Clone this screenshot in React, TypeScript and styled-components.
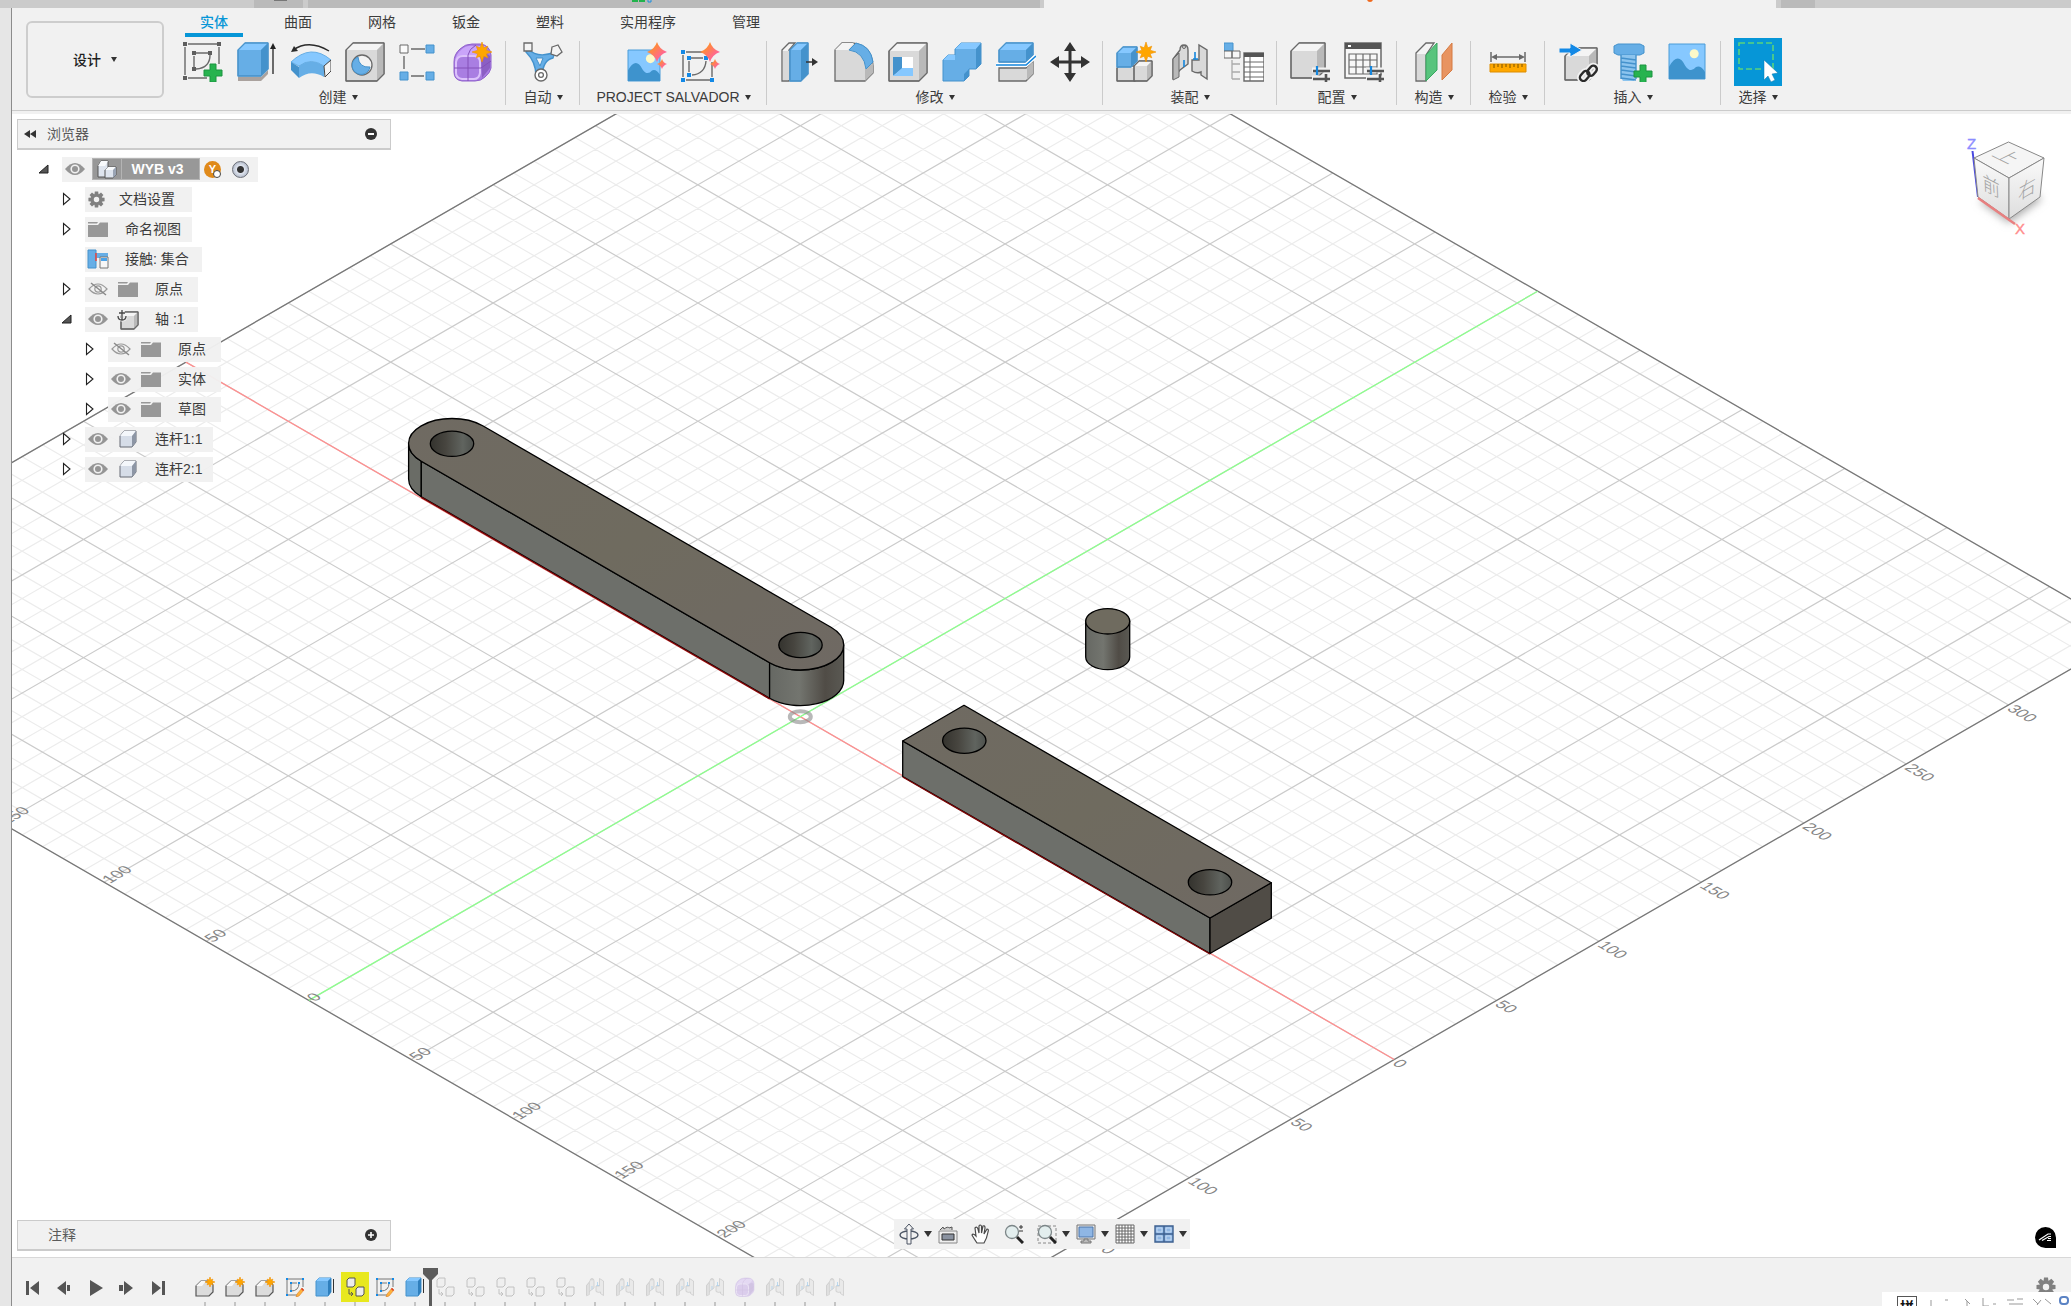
import React from 'react';
import styled, { createGlobalStyle, css } from 'styled-components';

const C = {
  bar: '#f1f1f1',
  line: '#cbcbcb',
  text: '#3c3c3c',
  blue: '#0696d7',
  hi: '#86c8ff',
  mid: '#66aee6',
  deep: '#4492cc',
  g1: '#f4f4f4',
  g2: '#d9d9d9',
  g3: '#b9b9b9',
  ink: '#696969',
};

const Global = createGlobalStyle`
  * { box-sizing: border-box; }
  html, body, #root { height: 100%; }
  body {
    margin: 0;
    overflow: hidden;
    background: #fff;
    color: ${C.text};
    font: 14px/20px "Liberation Sans", "Noto Sans CJK SC", sans-serif;
  }
  button {
    margin: 0;
    padding: 0;
    border: 0;
    background: none;
    color: inherit;
    font: inherit;
    cursor: pointer;
  }
  svg { display: block; }
`;

/* ---------- shell ---------- */

const Page = styled.div`
  display: grid;
  grid-template: 8px auto 1fr auto / 12px 1fr;
  height: 100%;
`;
const TopStrip = styled.div`
  grid-column: 1 / -1;
  display: flex;
  background: #cbcbcb;
  overflow: hidden;
`;
const StripPart = styled.div<{ $w?: number; $bg: string }>`
  flex: ${p => (p.$w ? `0 0 ${p.$w}px` : '1 1 0')};
  display: flex;
  background: ${p => p.$bg};
`;
const LeftStrip = styled.div`
  grid-row: 2 / 5;
  background: #e6e6e6;
  border-right: 1px solid #8c8c8c;
`;

/* ---------- toolbar ---------- */

const Toolbar = styled.header`
  display: flex;
  height: 106px;
  padding-left: 14px;
  background: linear-gradient(${C.line}, ${C.line}) 0 102px / 100% 1px no-repeat ${C.bar};
`;
const Workspace = styled.button`
  display: flex;
  align-items: center;
  justify-content: center;
  gap: 10px;
  width: 138px;
  height: 77px;
  margin: 13px 12px 0 0;
  border: 2px solid #cdcdcd;
  border-radius: 6px;
  font-weight: 500;
  color: #1e1e1e;
`;
const Caret = styled.span<{ $small?: boolean }>`
  width: 0;
  height: 0;
  border: solid transparent;
  border-width: ${p => (p.$small ? '5px 3px 0' : '6px 4px 0')};
  border-top-color: #333;
`;
const Ribbon = styled.div`
  display: flex;
  flex-direction: column;
  min-width: 0;
`;
const Tabs = styled.nav`
  display: flex;
  gap: 26px;
  height: 30px;
  padding-left: 9px;
`;
const Tab = styled.button<{ $on?: boolean }>`
  height: 29px;
  padding: 0 15px 2px;
  white-space: nowrap;
  ${p => p.$on && css`
    color: ${C.blue};
    font-weight: 500;
    box-shadow: inset 0 -4px 0 ${C.blue};
  `}
`;
const Groups = styled.div`
  display: flex;
  align-items: flex-start;
`;
const Group = styled.section<{ $min?: number; $first?: boolean; $last?: boolean }>`
  display: flex;
  flex-direction: column;
  align-items: center;
  min-width: ${p => p.$min ?? 74}px;
  padding: 0 6px 0 ${p => (p.$first ? 0 : 6)}px;
  ${p => !p.$last && css`
    background: linear-gradient(${C.line}, ${C.line}) right 3px / 1px 64px no-repeat;
  `}
`;
const Tools = styled.div`
  display: flex;
`;
const Tool = styled.button<{ $on?: boolean }>`
  display: flex;
  align-items: center;
  justify-content: center;
  width: ${p => (p.$on ? 48 : 54)}px;
  height: 48px;
  background: ${p => (p.$on ? C.blue : 'transparent')};
`;
const GroupMenu = styled.button`
  display: flex;
  align-items: center;
  gap: 5px;
  height: 22px;
  white-space: nowrap;
`;

/* ---------- viewport ---------- */

const Viewport = styled.main`
  position: relative;
  display: flex;
  flex-direction: column;
  justify-content: space-between;
  min-height: 0;
  padding: 5px 5px 6px;
  overflow: hidden;
  background: #fff;
`;
const Canvas = styled.svg`
  position: absolute;
  inset: 0;
  width: 100%;
  height: 100%;
`;
const Overlay = styled.div`
  position: relative;
  display: flex;
  justify-content: space-between;
  align-items: flex-start;
`;
const Side = styled.div`
  flex: 0 0 374px;
`;
const Panel = styled.div`
  display: flex;
  align-items: center;
  height: 31px;
  padding: 0 12px 0 5px;
  background: ${C.bar};
  border: 1px solid ${C.line};
  border-bottom-width: 2px;
  color: #5a5a5a;
`;
const PanelTitle = styled.span<{ $indent?: boolean }>`
  flex: 1;
  margin-left: ${p => (p.$indent ? 25 : 10)}px;
`;
const Tree = styled.ul`
  margin: 4px 0 0;
  padding: 0;
  list-style: none;
`;
const Row = styled.li<{ $level: number }>`
  display: flex;
  align-items: center;
  height: 30px;
  padding-left: ${p => 22 + p.$level * 23}px;
`;
const Twist = styled.button`
  width: 12px;
  height: 16px;
  margin-right: 11px;
`;
const Chip = styled.div<{ $w: number }>`
  display: flex;
  align-items: center;
  width: ${p => p.$w}px;
  height: 25px;
  background: rgba(240, 240, 240, 0.96);
`;
const EyeBox = styled.button`
  display: flex;
  justify-content: center;
  width: 26px;
  margin-right: 4px;
`;
const Glyph = styled.span<{ $w?: number }>`
  flex: none;
  display: flex;
  justify-content: center;
  width: ${p => p.$w ?? 26}px;
`;
const Label = styled.span<{ $gap?: number }>`
  margin-left: ${p => p.$gap ?? 14}px;
  white-space: nowrap;
`;
const RootName = styled.div`
  display: flex;
  align-items: center;
  width: 108px;
  height: 22px;
  margin-right: 4px;
  background: #989898;
  border: 1px solid #b4b4b4;
  color: #fff;
  font-weight: 700;
  & > span:last-child {
    flex: 1;
    padding-right: 6px;
    border-left: 1px solid #b4b4b4;
    text-align: center;
  }
`;
const Radio = styled.input`
  appearance: none;
  width: 17px;
  height: 17px;
  margin: 0 0 0 11px;
  border: 1px solid #6c6f78;
  border-radius: 50%;
  background: radial-gradient(circle, #333 0 3px, #dfe4ee 4px, #b4bccb 8px);
`;
const Version = styled.span`
  width: 17px;
  height: 17px;
  border-radius: 50%;
  background: #e08a1a;
  color: #fff;
  font-size: 11px;
  line-height: 17px;
  font-weight: 700;
  text-align: center;
  position: relative;
  &::after {
    content: '';
    position: absolute;
    right: 0;
    bottom: 0;
    width: 6px;
    height: 6px;
    border: 1px solid #444;
    border-radius: 50%;
    background: #fff;
  }
`;
const CubeBox = styled.div`
  margin: 16px 16px 0 0;
`;
const BottomOverlay = styled.div`
  position: relative;
  display: grid;
  grid-template-columns: 374px 1fr 374px;
  align-items: end;
`;
const NavBar = styled.div`
  justify-self: center;
  display: flex;
  align-items: center;
  gap: 6px;
  width: 296px;
  height: 30px;
  margin-bottom: 2px;
  padding: 0 5px;
  background: ${C.bar};
`;
const NavItem = styled.button<{ $wide?: boolean }>`
  display: flex;
  align-items: center;
  justify-content: space-between;
  flex: none;
  width: ${p => (p.$wide ? 33 : 27)}px;
  height: 26px;
`;
const Help = styled.button`
  justify-self: end;
  margin: 0 10px 3px 0;
`;

/* ---------- timeline ---------- */

const Timeline = styled.footer`
  position: relative;
  display: flex;
  height: 49px;
  background: ${C.bar};
  border-top: 1px solid #d8d8d8;
  overflow: hidden;
`;
const Transport = styled.div`
  display: flex;
  align-items: center;
  gap: 11px;
  height: 60px;
  padding-left: 11px;
`;
const Play = styled.button`
  display: flex;
  justify-content: center;
  width: 20px;
`;
const Steps = styled.div`
  display: flex;
  margin: 14px 0 0 23px;
`;
const Step = styled.button<{ $on?: boolean; $faded?: boolean }>`
  position: relative;
  display: flex;
  justify-content: center;
  align-items: flex-start;
  flex: none;
  width: 30px;
  height: 36px;
  padding-top: 5px;
  background:
    linear-gradient(#c4c4c4, #c4c4c4) center 30px / 2px 5px no-repeat
    ${p => (p.$on ? ', linear-gradient(#e8e81e, #e8e81e) center top / 28px 30px no-repeat' : '')};
  & > svg { opacity: ${p => (p.$faded ? 0.3 : 1)}; }
`;
const Marker = styled.div`
  position: absolute;
  z-index: 1;
  top: -4px;
  right: -8px;
  width: 15px;
  height: 40px;
  clip-path: polygon(0 0, 100% 0, 100% 6px, 9px 12px, 9px 100%, 6px 100%, 6px 12px, 0 6px);
  background: #5c5c5c;
`;
const Corner = styled.div`
  flex: 1;
  display: flex;
  flex-direction: column;
  align-items: flex-end;
`;
const Settings = styled.button`
  width: 20px;
  height: 20px;
  margin: 19px 15px 0 0;
`;
const Ime = styled.div`
  position: absolute;
  right: 0;
  bottom: 0;
  display: flex;
  gap: 12px;
  width: 189px;
  height: 14px;
  padding: 4px 2px 0 15px;
  background: #fff;
  overflow: hidden;
  color: #111;
`;
const ImeMode = styled.span`
  flex: none;
  height: 22px;
  padding: 0 2px;
  border: 1px solid #555;
  font-weight: 700;
`;

/* ---------- shared drawing pieces ---------- */

const Icon: React.FC<{ s?: number; w?: number; h?: number; box?: string; children: React.ReactNode }> = ({ s = 40, w, h, box, children }) => (
  <svg width={w ?? s} height={h ?? s} viewBox={box ?? `0 0 ${w ?? s} ${h ?? s}`} fill="none" aria-hidden="true">{children}</svg>
);
const Plus = ({ x, y }: { x: number; y: number }) => (
  <path d={`M${x - 3} ${y - 9}h6v6h6v6h-6v6h-6v-6h-6v-6h6z`} fill="#27b34f" stroke="#1c9440" strokeWidth="1" />
);
const Burst = ({ x, y, r = 10 }: { x: number; y: number; r?: number }) => {
  const pts = Array.from({ length: 16 }, (_, i) => {
    const a = (i * Math.PI) / 8;
    const q = i % 2 ? r * 0.46 : i % 4 ? r * 0.82 : r;
    return `${(x + q * Math.sin(a)).toFixed(1)},${(y - q * Math.cos(a)).toFixed(1)}`;
  }).join(' ');
  return <polygon points={pts} fill="#ffa600" stroke="#f09000" strokeWidth=".6" />;
};
const Spark = ({ x, y, r }: { x: number; y: number; r: number }) => {
  const k = r * 0.25;
  return <path d={`M${x} ${y - r}Q${x + k} ${y - k} ${x + r} ${y}Q${x + k} ${y + k} ${x} ${y + r}Q${x - k} ${y + k} ${x - r} ${y}Q${x - k} ${y - k} ${x} ${y - r}z`} fill="url(#spark)" />;
};
const Box = ({ x, y, w, h, d, c = 'gray' }: { x: number; y: number; w: number; h: number; d: number; c?: 'gray' | 'blue' }) => {
  const [a, b, e, s] = c === 'gray' ? [C.g1, C.g2, C.g3, C.ink] : [C.hi, C.mid, C.deep, '#4a94cc'];
  return (
    <g stroke={s} strokeLinejoin="round">
      <path d={`M${x} ${y + d}L${x + d} ${y}H${x + w}V${y + h - d}L${x + w - d} ${y + h}H${x}z`} fill={b} />
      <path d={`M${x} ${y + d}L${x + d} ${y}H${x + w}L${x + w - d} ${y + d}z`} fill={a} stroke="none" />
      <path d={`M${x + w} ${y}V${y + h - d}L${x + w - d} ${y + h}V${y + d}z`} fill={e} stroke="none" />
      <path d={`M${x} ${y + d}L${x + d} ${y}H${x + w}V${y + h - d}L${x + w - d} ${y + h}H${x}z`} strokeWidth="1.3" />
    </g>
  );
};

const SketchIcon = () => (
  <Icon>
    <path d="M5 2H34M2 5V33M36 5V22M5 36H24M13 11H25M11 14V25M27 13Q27 26 13 27" stroke={C.ink} strokeWidth="1.4" />
    <path d="M0 0h4v4H0zM34 0h4v4h-4zM0 34h4v4H0zM9 9h4v4H9zM25 9h4v4h-4zM9 25h4v4H9z" fill="#5e5e5e" />
    <Plus x={30} y={31} />
  </Icon>
);
const ExtrudeIcon = () => (
  <Icon>
    <path d="M1 35H24L31 28V32L24 39H1z" fill="#aaa29e" />
    <Box x={1} y={1} w={30} h={33} d={7} c="blue" />
    <path d="M36 32V5" stroke="#222" strokeWidth="1.3" /><path d="M36 1l3 6h-6z" fill="#222" />
  </Icon>
);
const RevolveIcon = () => (
  <Icon>
    <path d="M2 8Q18-3 38 9" stroke="#2b2b2b" strokeWidth="1.4" /><path d="M0 10l3-6 4 5z" fill="#2b2b2b" />
    <path d="M0 20Q20 1 40 18L33 24Q20 15 8 24z" fill={C.hi} stroke={C.mid} />
    <path d="M0 20L8 25V36L0 28z" fill={C.deep} /><path d="M8 24Q20 15 33 24V35Q20 27 8 36z" fill={C.mid} />
    <path d="M33 24l7-6v11l-6 6z" fill={C.g1} stroke="#444" />
  </Icon>
);
const HoleIcon = () => (
  <Icon><Box x={1} y={1} w={38} h={38} d={7} /><circle cx="17" cy="23" r="10" fill="#f3f3f3" stroke={C.ink} strokeWidth="1.3" /><path d="M13 15Q14 26 25 25A9 9 0 1 1 13 15z" fill={C.mid} stroke={C.deep} /></Icon>
);
const PatternIcon = () => (
  <Icon>
    <path d="M12 7H26M5 14V27M12 34H25" stroke={C.ink} strokeWidth="1.4" />
    <path d="M1 3h8v8H1z" fill="#fafafa" stroke={C.ink} /><path d="M27 3h8v8h-8zM27 30h8v8h-8zM1 30h8v8H1z" fill={C.mid} stroke={C.deep} />
  </Icon>
);
const Form = () => (
  <>
    <path d="M1 20Q1 12 7 7Q12 2 19 2H27Q37 3 38 13V26Q37 31 32 35Q28 39 22 39H9Q1 38 1 30z" fill="#a97ee2" stroke="#8f60cc" />
    <path d="M2 19Q3 12 9 7Q14 3 21 4H31Q36 6 33 9L28 14H9Q4 15 2 19z" fill="#c9a4fa" />
    <path d="M28 14Q34 10 37 14V26L29 36z" fill="#8b5fc4" />
    <path d="M3 20Q4 14 10 14H22Q27 15 27 20V31Q26 37 21 37H9Q3 36 3 31z" stroke="#dcc2fb" strokeWidth="2" />
    <path d="M15 13V39M1 26H28L38 19M15 13Q16 7 23 3" stroke="#8450b8" />
  </>
);
const FormIcon = () => <Icon><Form /><Burst x={29} y={10} /></Icon>;
const AutoIcon = () => (
  <Icon>
    <path d="M5 7Q15 17 32 10L30 16Q20 18 19 34H13Q13 20 3 10z" fill={C.mid} stroke={C.deep} strokeWidth="1.4" />
    <path d="M13 16l7 0-3 8z" fill="#f4f4f4" stroke={C.deep} />
    <path d="M1 1h8v8H1zM29 5l6-2 4 7-5 4-6-2z" fill="#f4f4f4" stroke={C.ink} strokeWidth="1.3" />
    <circle cx="18" cy="33" r="6" fill="#fff" stroke={C.ink} strokeWidth="1.4" /><circle cx="18" cy="33" r="2.4" stroke={C.ink} strokeWidth="1.3" />
  </Icon>
);
const Landscape = ({ w, h }: { w: number; h: number }) => (
  <>
    <path d={`M0 0H${w}V${h}H0z`} fill={C.hi} stroke="#4b9cd8" />
    <path d={`M0 ${h * 0.65}Q${w * 0.25} ${h * 0.2} ${w * 0.45} ${h * 0.62}Q${w * 0.6} ${h * 0.85} ${w * 0.75} ${h * 0.66}Q${w * 0.88} ${h * 0.6} ${w} ${h * 0.8}V${h}H0z`} fill="#3e93cd" />
    <circle cx={w * 0.7} cy={h * 0.28} r="4.5" fill="#fdf9c9" />
  </>
);
const SalvadorImage = () => <Icon><g transform="translate(1 8)"><Landscape w={32} h={31} /></g><Spark x={30} y={10} r={10} /><Spark x={35} y={22} r={5} /></Icon>;
const SalvadorSketch = () => (
  <Icon>
    <path d="M5 10H22M2 13V35M31 20V35M5 38H29M10 16H22M8 19V30M25 19Q24 32 11 33" stroke={C.ink} strokeWidth="1.4" />
    <path d="M0 8h4v4H0zM0 36h4v4H0zM29 36h4v4h-4zM6 14h4v4H6zM23 14h4v4h-4zM6 31h4v4H6z" fill="#1389e6" />
    <Spark x={29} y={10} r={10} /><Spark x={34} y={22} r={5} />
  </Icon>
);
const PressPull = () => (
  <Icon><path d="M2 8l7-7h6l-6 7v31H2z" fill={C.g1} stroke={C.ink} strokeWidth="1.3" /><path d="M3 9h6v29H3z" fill={C.g2} /><Box x={10} y={1} w={18} h={38} d={7} c="blue" /><path d="M26 20h8" stroke="#333" strokeWidth="1.5" /><path d="M38 20l-6-4v8z" fill="#333" /></Icon>
);
const FilletIcon = () => (
  <Icon><path d="M1 39V8L8 1H18Q38 3 39 24V31L31 39z" fill={C.g2} stroke={C.ink} strokeWidth="1.3" /><path d="M1 8L8 1h12l-6 7z" fill={C.g1} /><path d="M31 27L39 21V31L31 39z" fill={C.g3} /><path d="M15 8L22 1Q37 4 39 20L32 27Q30 10 15 8z" fill={C.mid} stroke={C.deep} /></Icon>
);
const ShellIcon = () => <Icon><Box x={1} y={1} w={38} h={38} d={8} /><path d="M5 15h20v19H5z" fill="#fff" /><path d="M5 15h9v12l-9 7z" fill={C.deep} /><path d="M5 34l9-8h11v8z" fill={C.hi} /></Icon>;
const CombineIcon = () => (
  <Icon><path d="M1 18L6 13H13V7L19 1H39V22L34 27H27V34L22 39H1z" fill={C.mid} stroke={C.deep} /><path d="M13 7L19 1H39L34 7zM1 18L6 13H13V18z" fill={C.hi} /><path d="M34 7L39 1V22L34 27zM22 32l5-5V34L22 39z" fill={C.deep} /></Icon>
);
const SplitIcon = () => (
  <Icon><Box x={3} y={1} w={34} h={19} d={7} c="blue" /><path d="M3 26H30L37 19V32L30 39H3z" fill={C.g2} stroke={C.ink} strokeWidth="1.3" /><path d="M31 26l6-6V32l-6 6z" fill={C.g3} /><path d="M0 23H30L40 14" stroke="#fff" strokeWidth="4" /><path d="M0 23H30L40 14" stroke="#1486dd" strokeWidth="1.6" /></Icon>
);
const MoveIcon = () => <Icon><path d="M20 6V34M6 20H34" stroke="#333" strokeWidth="3" /><path d="M20 0l6 9H14zM20 40l-6-9h12zM0 20l9-6v12zM40 20l-9 6V14z" fill="#333" /></Icon>;
const NewComponent = () => (
  <Icon><Box x={1} y={24} w={20} h={15} d={2} /><Box x={18} y={19} w={18} h={20} d={5} /><Box x={1} y={5} w={20} h={20} d={6} c="blue" /><Burst x={30} y={10} /></Icon>
);
const Joint = () => (
  <>
    <path d="M3 36V17L10 8Q10 3 14 3Q18 3 18 8V22L10 28z" fill={C.g2} stroke={C.ink} strokeWidth="1.4" />
    <path d="M9 35l-6 3V17l6-6z" fill={C.g3} stroke={C.ink} />
    <path d="M37 37V8L29 3V18L22 18V29Q27 32 31 30V33z" fill={C.g2} stroke={C.ink} strokeWidth="1.4" />
    <circle cx="14" cy="5" r="1.5" stroke={C.ink} /><path d="M14 18v7M25 10v7M23 17h5" stroke="#1486dd" strokeWidth="1.6" />
  </>
);
const JointIcon = () => <Icon><Joint /></Icon>;
const AssemblyTable = () => (
  <Icon>
    <path d="M0 1h9v8H0z" fill={C.mid} stroke={C.deep} /><path d="M0 9h8v7H0zM8 9h8v7H8z" fill="#f7f7f7" stroke={C.ink} />
    <path d="M8 18V37M8 22h8M8 30h8M8 37h8" stroke="#aaa" strokeWidth="1.3" />
    <path d="M20 11h20v28H20z" fill="#fff" stroke={C.ink} strokeWidth="1.4" /><path d="M20 11h20v4H20z" fill="#555" />
    <path d="M20 20h20M20 25h20M20 30h20M20 35h20M26 15v24" stroke={C.ink} />
  </Icon>
);
const Sliders = () => (
  <g><path d="M22 28H40M22 36H40" stroke="#f1f1f1" strokeWidth="5" /><path d="M23 29H40M23 37H40M36 32v8" stroke="#555" strokeWidth="2.6" /><path d="M27 24v9" stroke="#1486dd" strokeWidth="2.2" /></g>
);
const ConfigIcon = () => <Icon><Box x={1} y={1} w={34} h={35} d={8} /><Sliders /></Icon>;
const ConfigTable = () => (
  <Icon><path d="M1 1h36v35H1z" fill="#f7f7f7" stroke={C.ink} strokeWidth="1.5" /><path d="M1 1h36v6H1z" fill="#555" /><path d="M4 3h3v2H4z" fill="#fff" /><path d="M5 12h28v20H5zM5 18h28M5 25h28M12 12v20M19 12v20M26 12v20" stroke={C.ink} strokeWidth="1.2" /><Sliders /></Icon>
);
const PlaneIcon = () => (
  <Icon><path d="M2 11l10-10h8l-8 12v26H2z" fill={C.g1} stroke={C.ink} strokeWidth="1.3" /><path d="M3 12h8v26H3z" fill={C.g2} /><path d="M12 13L23 1V28L12 39z" fill="#58c47d" stroke="#39a761" /><path d="M28 13L38 1V28L28 38z" fill="#e89461" stroke="#d67b43" /></Icon>
);
const MeasureIcon = () => (
  <Icon><path d="M3 10V20M37 10V20M6 15H34" stroke={C.ink} strokeWidth="1.5" /><path d="M3 15l6-3v6zM37 15l-6-3v6z" fill={C.ink} /><path d="M2 22H38V30H2z" fill="#ffa800" stroke="#dd8d00" /><path d="M6 22v4M10 22v3M14 22v4M18 22v3M22 22v4M26 22v3M30 22v4M34 22v3" stroke="#7a5300" /></Icon>
);
const InsertDerive = () => (
  <Icon>
    <Box x={6} y={6} w={32} h={32} d={8} /><path d="M0 6H11V1L23 8L11 15V11H0z" fill="#1389e6" stroke="#f1f1f1" />
    <g stroke="#f1f1f1" strokeWidth="6"><rect x="20" y="31" width="11" height="7" rx="3.5" transform="rotate(-50 25 34)" /><rect x="27" y="25" width="11" height="7" rx="3.5" transform="rotate(-50 33 28)" /></g>
    <g stroke="#2b2b2b" strokeWidth="2.4"><rect x="20" y="31" width="11" height="7" rx="3.5" transform="rotate(-50 25 34)" /><rect x="27" y="25" width="11" height="7" rx="3.5" transform="rotate(-50 33 28)" /></g>
  </Icon>
);
const BoltIcon = () => (
  <Icon><path d="M1 4l4-2H27l4 2V11l-4 2H5l-4-2z" fill={C.mid} stroke={C.deep} /><path d="M8 13H23V36l-2 3H10l-2-3z" fill="#8cc4ee" /><path d="M8 16l15 2M8 20l15 2M8 24l15 2M8 28l15 2M8 32l15 2M8 36l15 2M8 13V37M23 13V37" stroke={C.deep} strokeWidth="1.4" /><Plus x={30} y={32} /></Icon>
);
const CanvasIcon = () => <Icon><g transform="translate(2 2)"><Landscape w={36} h={35} /></g></Icon>;
const SelectIcon = () => (
  <Icon s={48}><path d="M5 5H39V31H5z" stroke="#59d47e" strokeWidth="1.6" strokeDasharray="6 3" /><path d="M30 22L44 35L38 36L41 42L37 44L34 38L30 42z" fill="#fff" stroke="#0b79ad" strokeWidth=".5" /></Icon>
);

const groups: { label: string; min?: number; on?: boolean; icons: [string, React.FC][] }[] = [
  { label: '创建', icons: [['创建草图', SketchIcon], ['拉伸', ExtrudeIcon], ['旋转', RevolveIcon], ['孔', HoleIcon], ['阵列', PatternIcon], ['创建形状', FormIcon]] },
  { label: '自动', icons: [['自动', AutoIcon]] },
  { label: 'PROJECT SALVADOR', min: 187, icons: [['图像', SalvadorImage], ['草图', SalvadorSketch]] },
  { label: '修改', icons: [['按拉', PressPull], ['圆角', FilletIcon], ['抽壳', ShellIcon], ['合并', CombineIcon], ['分割', SplitIcon], ['移动', MoveIcon]] },
  { label: '装配', icons: [['新建零部件', NewComponent], ['联接', JointIcon], ['零部件表', AssemblyTable]] },
  { label: '配置', icons: [['配置', ConfigIcon], ['配置表', ConfigTable]] },
  { label: '构造', icons: [['平面', PlaneIcon]] },
  { label: '检验', icons: [['测量', MeasureIcon]] },
  { label: '插入', min: 176, icons: [['衍生', InsertDerive], ['紧固件', BoltIcon], ['画布', CanvasIcon]] },
  { label: '选择', on: true, icons: [['选择', SelectIcon]] },
];

/* ---------- browser tree ---------- */

const Eye = ({ off }: { off?: boolean }) => off ? (
  <Icon w={20} h={14}><path d="M1 7Q10-3 19 7Q10 17 1 7z" stroke="#999" strokeWidth="1.2" /><circle cx="10" cy="7" r="3.2" stroke="#999" strokeWidth="1.2" /><path d="M3 1L18 13" stroke="#888" strokeWidth="1.4" /></Icon>
) : (
  <Icon w={20} h={14}><path d="M0 7Q10-5 20 7Q10 19 0 7z" fill="#959595" /><circle cx="10" cy="7" r="3.8" stroke="#f1f1f1" strokeWidth="1.6" fill="#959595" /></Icon>
);
const Folder = () => <Icon w={22} h={17}><path d="M1 1h10l-1 1.500H1zM1 4H11L13 1.500H21V16H1z" fill="#989898" /></Icon>;
const GearShape = ({ s }: { s: number }) => (
  <Icon w={s} h={s} box="-10 -10 20 20">
    {[0, 45, 90, 135, 180, 225, 270, 315].map(a => <path key={a} d="M-2-9.500H2L2.500-5.500H-2.500z" fill="#808080" transform={`rotate(${a})`} />)}
    <circle r="5" stroke="#808080" strokeWidth="3.600" />
  </Icon>
);
const ContactIcon = () => <Icon w={22} h={20}><path d="M1 1h8v18H1z" fill={C.mid} stroke={C.deep} /><path d="M9 4h12v5H9z" fill={C.mid} /><path d="M9 4v8" stroke="#e8453c" strokeWidth="1.5" /><path d="M13 8h8v11h-8z" fill="#f7f7f7" stroke="#777" /><path d="M14 9h6v3h-6z" fill="#4aa3ea" /></Icon>;
const SmallBox = () => <Icon w={18} h={18}><path d="M1 6l4-5h12v11l-4 5H1z" fill="#d6dde8" stroke="#666b75" /><path d="M1 6l4-5h12l-4 5z" fill="#f4f7fb" /><path d="M17 1v11l-4 5V6z" fill="#8d96a5" /></Icon>;
const AnchorBox = () => <Icon w={22} h={21}><Box x={4} y={3} w={17} h={17} d={4} /><path d="M5 0v10M2 4h6M1 7q0 4 4 4t4-4" stroke="#f1f1f1" strokeWidth="3" /><path d="M5 1v10M2 4h6M1 7q0 4 4 4t4-4" stroke="#444" strokeWidth="1.3" /></Icon>;
const RootBox = () => <Icon w={20} h={19}><path d="M1 6l3-5h7v16H1z" fill="#dfe5ee" stroke="#555" /><path d="M8 10l3-3h8v8l-3 3H8z" fill="#dfe5ee" stroke="#555" /><path d="M8 10l3-3h8l-3 3zM1 6l3-5h7l-3 5z" fill="#f8fafc" /><path d="M16 10l3-3v8l-3 3z" fill="#9aa4b4" /></Icon>;

type Node = { text: string; level: number; open?: boolean; leaf?: boolean; eye?: 'on' | 'off'; icon: React.FC; w: number; gap?: number };
const nodes: Node[] = [
  { text: '文档设置', level: 1, icon: () => <GearShape s={17} />, w: 107, gap: 12 },
  { text: '命名视图', level: 1, icon: Folder, w: 107 },
  { text: '接触: 集合', level: 1, leaf: true, icon: ContactIcon, w: 117 },
  { text: '原点', level: 1, eye: 'off', icon: Folder, w: 113 },
  { text: '轴 :1', level: 1, open: true, eye: 'on', icon: AnchorBox, w: 113 },
  { text: '原点', level: 2, eye: 'off', icon: Folder, w: 113 },
  { text: '实体', level: 2, eye: 'on', icon: Folder, w: 113 },
  { text: '草图', level: 2, eye: 'on', icon: Folder, w: 113 },
  { text: '连杆1:1', level: 1, eye: 'on', icon: SmallBox, w: 128 },
  { text: '连杆2:1', level: 1, eye: 'on', icon: SmallBox, w: 128 },
];
const TwistIcon = ({ open }: { open?: boolean }) => open
  ? <Icon w={12} h={16}><path d="M0 12L9 4V12z" fill="#555" stroke="#222" /></Icon>
  : <Icon w={12} h={16}><path d="M1.500 2.500L8 8L1.500 13.500z" fill="#fff" stroke="#222" strokeWidth="1.1" /></Icon>;

/* ---------- scene ---------- */

const OX = 800.3, OY = 716.7, SX = 102.4, SY = 59.1;
const pt = (u: number, v: number) => `${(OX + (u + v) * SX).toFixed(1)} ${(OY + (u - v) * SY).toFixed(1)}`;
const U0 = -6, U1 = 5.8, V0 = -4.8, V1 = 7.2;
const gridPath = (major: boolean) => {
  let d = '';
  for (let i = -30; i <= 29; i++) if ((i % 5 === 0) === major) d += `M${pt(i / 5, V0)}L${pt(i / 5, V1)}`;
  for (let i = -24; i <= 36; i++) if ((i % 5 === 0) === major) d += `M${pt(U0, i / 5)}L${pt(U1, i / 5)}`;
  return d;
};
const Hole = ({ x, y }: { x: number; y: number }) => <ellipse cx={x} cy={y} rx="21.700" ry="12.600" fill="url(#hole)" stroke="#000" strokeWidth="1.3" />;

const Scene = () => (
  <Canvas aria-label="模型">
    <defs>
      <linearGradient id="hole"><stop offset="0" stopColor="#34332e" /><stop offset=".35" stopColor="#47453f" /><stop offset=".75" stopColor="#60645f" /><stop offset="1" stopColor="#4d504c" /></linearGradient>
      <linearGradient id="round"><stop offset="0" stopColor="#666863" /><stop offset=".4" stopColor="#73756f" /><stop offset=".75" stopColor="#504c46" /><stop offset="1" stopColor="#5a5953" /></linearGradient>
      <linearGradient id="top" x2="1" y2="1"><stop offset="0" stopColor="#6f6a62" /><stop offset=".5" stopColor="#6f6b5f" /><stop offset="1" stopColor="#6f6963" /></linearGradient>
      <linearGradient id="spark" x2="1" y2="1"><stop offset=".3" stopColor="#ff8a3a" /><stop offset=".8" stopColor="#ff5fa8" /></linearGradient>
    </defs>
    <g transform="translate(-12 -114)" fill="none">
      <path d={gridPath(false)} stroke="#ececec" strokeWidth="1.2" />
      <path d={gridPath(true)} stroke="#cbcbcb" strokeWidth="1.2" />
      <path d={`M${pt(U0, V0)}L${pt(U1, V0)}L${pt(U1, V1)}L${pt(U0, V1)}z`} stroke="#777" strokeWidth="1.3" />
      <path d={`M${pt(U0, 0)}L${pt(U1, 0)}`} stroke="#ff8f8f" strokeWidth="1.3" />
      <path d={`M${pt(0, V0)}L${pt(0, V1)}`} stroke="#8dff8d" strokeWidth="1.3" />
      <g fontFamily="'Liberation Sans', sans-serif" fontSize="16" fill="#858585">
        {[-3, -2, -1, 0, 1, 2, 3, 4, 5, 6].map(v => (
          <text key={v} x="3" y="6" transform={`matrix(.866 .5 -.866 .5 ${pt(U1, v)})`}>{Math.abs(v) * 50}</text>
        ))}
        {[-3, -2, -1, 0, 1, 2, 3, 4].map(u => (
          <text key={u} x="2" y="5" transform={`matrix(.866 -.5 .866 .5 ${pt(u, V0)})`}>{Math.abs(u) * 50}</text>
        ))}
      </g>
      <ellipse cx={OX} cy={OY} rx="10.500" ry="5.500" stroke="#888" strokeOpacity=".6" strokeWidth="4" />

      <g stroke="#000" strokeWidth="1.3" strokeLinejoin="round">
        <path d="M408.600 443.500A43.400 25 0 0 0 421.300 461.200V496.700A43.400 25 0 0 1 408.600 479z" fill="#6a6c66" />
        <path d="M421.300 461.200L769.600 662.700V698.200L421.300 496.700z" fill="#6d6f6a" />
        <path d="M769.600 662.700A43.400 25 0 0 0 843.700 645V680.500A43.400 25 0 0 1 769.600 698.200z" fill="url(#round)" />
        <path d="M421.300 461.200A43.400 25 0 0 1 482.700 425.800L831 627.300A43.400 25 0 0 1 769.600 662.700z" fill="url(#top)" />
      </g>
      <path d="M421.300 497.300L769.600 698.800" stroke="#7c0505" strokeWidth="1.4" />
      <Hole x={452} y={443.8} /><Hole x={800.5} y={645} />

      <g stroke="#000" strokeWidth="1.3" strokeLinejoin="round">
        <path d="M902.700 741L1210 918V953.500L902.700 776.500z" fill="#6d6f6a" />
        <path d="M1210 918L1271.300 882.700V918.200L1210 953.500z" fill="#504c46" />
        <path d="M902.700 741L964 705.300L1271.300 882.700L1210 918z" fill="url(#top)" />
      </g>
      <path d="M902.700 777L1210 954" stroke="#7c0505" strokeWidth="1.4" />
      <Hole x={964.3} y={740.7} /><Hole x={1210} y={882.3} />

      <path d="M1085.700 621.300V657A22 12.700 0 0 0 1129.700 657V621.300z" fill="url(#round)" stroke="#000" strokeWidth="1.3" />
      <ellipse cx="1107.700" cy="621.300" rx="22" ry="12.700" fill="#6f6b5f" stroke="#000" strokeWidth="1.3" />
    </g>
  </Canvas>
);

const ViewCube = () => (
  <svg width="86" height="104" viewBox="0 0 86 104" fill="none" aria-label="ViewCube">
    <defs>
      <filter id="soft" x="-30%" y="-30%" width="160%" height="160%"><feGaussianBlur stdDeviation="4" /></filter>
      <linearGradient id="face" x2="0" y2="1"><stop offset="0" stopColor="#fafafa" /><stop offset="1" stopColor="#dedede" /></linearGradient>
    </defs>
    <path d="M15 66L45 88L78 64L60 50z" fill="#aaa" filter="url(#soft)" />
    <path d="M8.500 16L14 62" stroke="#4a4ae0" strokeWidth="2" />
    <path d="M10 23L44.500 7L80 23L45 43z" fill="#f5f5f5" stroke="#888" />
    <path d="M10 23L45 43V84L14 62z" fill="url(#face)" stroke="#888" />
    <path d="M80 23L45 43V84L76 62z" fill="url(#face)" stroke="#888" />
    <path d="M14 63L51 89" stroke="#e88080" strokeWidth="2.500" />
    <g fontFamily="'Noto Sans CJK SC', sans-serif" fill="#a2a2a2" fontWeight="300">
      <text fontSize="22" transform="matrix(.85 .42 -.85 .42 44 17)" x="-6" y="14">上</text>
      <text fontSize="20" transform="matrix(.87 .45 .05 1 19 54)">前</text>
      <text fontSize="20" transform="matrix(.87 -.5 -.05 1 54 66)">右</text>
    </g>
    <g fontFamily="'Liberation Sans', sans-serif" fontSize="15" strokeWidth=".4">
      <text x="3" y="14" fill="#8c8cff" stroke="#8c8cff">Z</text>
      <text x="51" y="99" fill="#ff8c8c" stroke="#ff8c8c">X</text>
    </g>
  </svg>
);

/* ---------- navigation icons ---------- */

const Orbit = () => <Icon w={20} h={22}><ellipse cx="10" cy="12" rx="9" ry="4" stroke="#4c5564" strokeWidth="1.4" /><path d="M8 21V6H5.500L10 1l4.500 5H12V21z" fill="#f4f4f4" stroke="#4c5564" /></Icon>;
const LookAt = () => <Icon w={20} h={20}><path d="M1 7h18v12H1z" fill="#eee" stroke="#888" /><path d="M4 10h12v6H4z" fill="#8a92a0" stroke="#333" /><path d="M2 6l3-3 1 2q4-3 5-1l3-1v3" stroke="#555" fill="#ccc" /></Icon>;
const Hand = () => <Icon w={20} h={20}><path d="M6 19Q2 13 1 11Q2 9 5 12L4 4Q6 2 7 5L8 9V2Q9 0 10.500 2V9L12 2Q14 1 14 4L13 10L16 5Q18 5 17 8Q16 14 13 19z" fill="#fff" stroke="#4a4a4a" strokeWidth="1.2" /></Icon>;
const Zoom = ({ win }: { win?: boolean }) => (
  <Icon w={20} h={20}>{win && <path d="M1 2H19V19H1z" stroke="#888" strokeDasharray="3 2" />}<circle cx="8" cy="8" r="6.500" fill="#e3eeee" stroke="#7c8688" strokeWidth="1.3" /><path d="M13 13L19 19" stroke="#222" strokeWidth="3" />{!win && <path d="M15 3h4M17 1v4M15 7h4" stroke="#333" />}</Icon>
);
const Display = () => <Icon w={20} h={20}><path d="M1 1h18v14H1z" fill="#e8e8e8" stroke="#777" /><path d="M3 3h14v10H3z" fill="#8fb6e4" stroke="#4b75aa" /><path d="M8 15h4v2h3v2H5v-2h3z" fill="#bbb" stroke="#777" /></Icon>;
const GridIcon = () => <Icon w={20} h={20}><path d="M1 1h18v18H1z" fill="#fff" /><path d="M1 1h18v18H1zM1 4h18M1 7h18M1 10h18M1 13h18M1 16h18M4 1v18M7 1v18M10 1v18M13 1v18M16 1v18" stroke="#666" /></Icon>;
const Views = () => <Icon w={20} h={18}><path d="M1 1h18v16H1z" fill="#8fb6e4" stroke="#3c5f8e" strokeWidth="1.4" /><path d="M10 1v16M1 9h18" stroke="#3c5f8e" strokeWidth="1.4" /><path d="M3 3h5v4H3zM12 3h5v4h-5zM3 11h5v4H3zM12 11h5v4h-5z" stroke="#c4daf3" /></Icon>;

const navItems: [string, React.FC, boolean][] = [
  ['动态观察', Orbit, true], ['观察方向', LookAt, false], ['平移', Hand, false], ['缩放', Zoom, false],
  ['窗口缩放', () => <Zoom win />, true], ['显示设置', Display, true], ['栅格和捕捉', GridIcon, true], ['视口', Views, true],
];

/* ---------- timeline icons ---------- */

const ComponentStep = () => <Icon w={20} h={20}><path d="M1 19V9L6 4H15L18 8V15L14 19z" fill="#dcdcdc" stroke="#555" strokeWidth="1.2" /><path d="M1 9l5-5h5l-4 5z" fill="#f8f8f8" /><Burst x={15} y={5} r={5} /></Icon>;
const SketchStep = () => <Icon w={20} h={20}><path d="M3 2H17M2 3V18M18 3V10M3 18H12M6 6H12M6 6V14M14 6Q14 14 6 14" stroke="#777" /><path d="M1 1h2v2H1zM17 1h2v2h-2zM1 17h2v2H1zM5 5h2v2H5zM13 5h2v2h-2zM5 13h2v2H5z" fill="#1389e6" /><path d="M17 11l2 2-5 6-3 1 1-3z" fill="#ffb23c" stroke="#d9822b" strokeWidth=".6" /><path d="M17 11l2 2-1 1-2-2z" fill="#e23b2e" /></Icon>;
const ExtrudeStep = () => <Icon w={20} h={20}><path d="M1 4l3-3h12v14l-3 4H1z" fill={C.mid} stroke={C.deep} /><path d="M1 4l3-3h12l-3 3z" fill={C.hi} /><path d="M13 4l3-3v14l-3 4z" fill="#2f7fbd" /><path d="M18.500 16V2" stroke="#333" /></Icon>;
const CopyStep = () => <Icon w={20} h={20}><path d="M2 3l2-2h6v7l-2 2H2zM11 12l2-2h6v7l-2 2h-6z" fill="#ececec" stroke="#555" strokeLinejoin="round" /><path d="M4 12v5h4M6 15l2 2-2 2" stroke="#555" /></Icon>;
const JointStep = () => <Icon w={20} h={20} box="0 0 40 40"><Joint /></Icon>;
const FormStep = () => <Icon w={20} h={20} box="0 0 40 40"><Form /></Icon>;

const steps: React.FC[] = [
  ComponentStep, ComponentStep, ComponentStep, SketchStep, ExtrudeStep, CopyStep, SketchStep, ExtrudeStep,
  CopyStep, CopyStep, CopyStep, CopyStep, CopyStep, JointStep, JointStep, JointStep, JointStep, JointStep,
  FormStep, JointStep, JointStep, JointStep,
];
const transport: [string, string][] = [
  ['转到开头', 'M2 2h3v14H2zM15 2v14L6 9z'],
  ['上一步', 'M11 2v14L2 9zM12 6h3v6h-3z'],
  ['播放', 'M4 1L17 9L4 17z'],
  ['下一步', 'M7 2v14L16 9zM2 6h4v6H2z'],
  ['转到结尾', 'M14 2h3v14h-3zM4 2v14l9-7z'],
];

export default function App() {
  return (
    <>
      <Global />
      <Page>
        <TopStrip>
          <StripPart $w={254} $bg="#cbcbcb">
            <Icon w={254} h={8}><path d="M0 0" /></Icon>
          </StripPart>
          <StripPart $w={49} $bg="#bababa">
            <Icon w={49} h={8}><path d="M20 0h13" stroke="#777" strokeWidth="2" /></Icon>
          </StripPart>
          <StripPart $w={5} $bg="#cbcbcb" />
          <StripPart $w={732} $bg="#bababa">
            <Icon w={350} h={8}><path d="M325 0v1h4V0M332 0v1h4V0" stroke="#22b34c" strokeWidth="2" /><path d="M340 0v2h3V0" stroke="#1a8ee0" /></Icon>
          </StripPart>
          <StripPart $w={4} $bg="#cbcbcb" />
          <StripPart $w={732} $bg={C.bar}>
            <Icon w={340} h={8}><circle cx="326" cy="-1" r="3" fill="#f0691e" /></Icon>
          </StripPart>
          <StripPart $w={5} $bg="#cbcbcb" />
          <StripPart $w={34} $bg="#bababa" />
          <StripPart $bg="#cbcbcb" />
        </TopStrip>
        <LeftStrip />

        <Toolbar>
          <Workspace>设计<Caret $small /></Workspace>
          <Ribbon>
            <Tabs>
              {['实体', '曲面', '网格', '钣金', '塑料', '实用程序', '管理'].map((t, i) => <Tab key={t} $on={i === 0}>{t}</Tab>)}
            </Tabs>
            <Groups>
              {groups.map((g, i) => (
                <Group key={g.label} $min={g.min} $first={i === 0} $last={g.on}>
                  <Tools>
                    {g.icons.map(([name, Pic]) => <Tool key={name} aria-label={name} $on={g.on}><Pic /></Tool>)}
                  </Tools>
                  <GroupMenu>{g.label}<Caret $small /></GroupMenu>
                </Group>
              ))}
            </Groups>
          </Ribbon>
        </Toolbar>

        <Viewport>
          <Scene />
          <Overlay>
            <Side>
              <Panel>
                <Icon w={14} h={10}><path d="M7 1v8L1 5zM13 1v8L7 5z" fill="#333" /></Icon>
                <PanelTitle>浏览器</PanelTitle>
                <button aria-label="折叠"><Icon w={14} h={14}><circle cx="7" cy="7" r="6" fill="#333" /><path d="M4 7h6" stroke="#fff" strokeWidth="2" /></Icon></button>
              </Panel>
              <Tree>
                <Row $level={0}>
                  <Twist aria-label="折叠"><TwistIcon open /></Twist>
                  <Chip $w={196}>
                    <EyeBox aria-label="可见性"><Eye /></EyeBox>
                    <RootName><Glyph $w={28}><RootBox /></Glyph><span>WYB v3</span></RootName>
                    <Version>Y</Version>
                    <Radio type="radio" name="active" defaultChecked aria-label="激活零部件" />
                  </Chip>
                </Row>
                {nodes.map((n, i) => (
                  <Row key={i} $level={n.level}>
                    {n.leaf ? <Twist as="span" /> : <Twist aria-label="展开"><TwistIcon open={n.open} /></Twist>}
                    <Chip $w={n.w}>
                      {n.eye && <EyeBox aria-label="可见性"><Eye off={n.eye === 'off'} /></EyeBox>}
                      <Glyph $w={n.gap ? 22 : 26}><n.icon /></Glyph>
                      <Label $gap={n.gap}>{n.text}</Label>
                    </Chip>
                  </Row>
                ))}
              </Tree>
            </Side>
            <CubeBox><ViewCube /></CubeBox>
          </Overlay>
          <BottomOverlay>
            <Panel>
              <PanelTitle $indent>注释</PanelTitle>
              <button aria-label="展开注释"><Icon w={14} h={14}><circle cx="7" cy="7" r="6" fill="#333" /><path d="M4 7h6M7 4v6" stroke="#fff" strokeWidth="1.600" /></Icon></button>
            </Panel>
            <NavBar>
              {navItems.map(([name, Pic, menu]) => <NavItem key={name} aria-label={name} $wide={menu}><Pic />{menu && <Caret />}</NavItem>)}
            </NavBar>
            <Help aria-label="助手"><Icon w={21} h={21}><path d="M10.500 0A10.500 10.500 0 0 0 10.500 21H21V10.500A10.500 10.500 0 0 0 10.500 0z" fill="#000" /><path d="M4 13L13 7h3M7 13.500L14 9.500h2M12 13.500h4M13 11.500h3" stroke="#fff" strokeWidth="1.2" /></Icon></Help>
          </BottomOverlay>
        </Viewport>

        <Timeline>
          <Transport>
            {transport.map(([name, d]) => <Play key={name} aria-label={name}><Icon s={18}><path d={d} fill="#555" /></Icon></Play>)}
          </Transport>
          <Steps>
            {steps.map((Pic, i) => (
              <Step key={i} aria-label={`特征 ${i + 1}`} $on={i === 5} $faded={i > 7}>
                <Pic />{i === 7 && <Marker />}
              </Step>
            ))}
          </Steps>
          <Corner>
            <Settings aria-label="设置"><GearShape s={20} /></Settings>
          </Corner>
          <Ime>
            <ImeMode>拼</ImeMode>
            <Icon w={140} h={10}><path d="M2 4v6M16 4h3M36 3l5 5M38 5v5M54 2v8h6M64 8h3M78 4h7M88 3h6M80 8h14M104 3l5 5M112 4l-4 5M116 3l6 5" stroke="#999" /><rect x="131" y="1" width="8" height="7" rx="3" stroke="#5b83c4" strokeWidth="2" /></Icon>
          </Ime>
        </Timeline>
      </Page>
    </>
  );
}
